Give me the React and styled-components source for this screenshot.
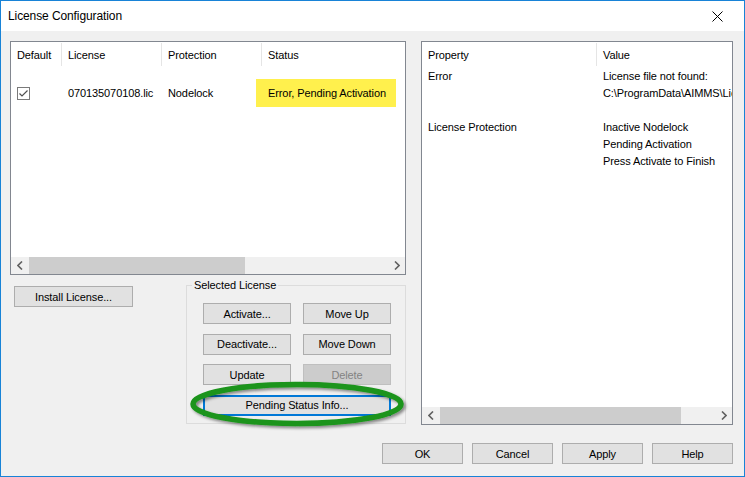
import styled, { createGlobalStyle } from "styled-components";

const GlobalStyle = createGlobalStyle`
  html, body { margin: 0; padding: 0; background: #ffffff; }
  body {
    font-family: "Liberation Sans", Arial, sans-serif;
    font-size: 11px;
    letter-spacing: -0.1px;
    color: #000;
  }
  * { box-sizing: border-box; }
`;

const Window = styled.div`
  position: relative;
  width: 745px;
  height: 477px;
  border: 1px solid #1883d7;
  background: #f0f0f0;
  display: flex;
  flex-direction: column;
  overflow: hidden;
`;

const TitleBar = styled.div`
  height: 30px;
  background: #ffffff;
  display: flex;
  align-items: center;
  justify-content: space-between;
  padding: 0 21px 0 7px;
  font-size: 12px;
`;

const Body = styled.div`
  flex: 1;
  display: flex;
  flex-direction: column;
  padding: 10px 11px 0 9px;
`;

const Main = styled.div`
  display: grid;
  grid-template-columns: 396px 312px;
  column-gap: 15px;
`;

const LeftColumn = styled.div`
  display: flex;
  flex-direction: column;
`;

const ListBox = styled.div`
  height: ${(p) => p.$h}px;
  background: #fff;
  border: 1px solid #828790;
  display: flex;
  flex-direction: column;
  overflow: hidden;
`;

const HeaderRow = styled.div`
  display: grid;
  grid-template-columns: ${(p) => p.$cols};
  height: 24px;
  flex: none;
`;

const HeaderCell = styled.div`
  display: flex;
  align-items: center;
  padding-left: 6px;
  border-right: ${(p) => (p.$last ? "none" : "1px solid #e5e5e5")};
  margin-top: 1px;
  white-space: nowrap;
`;

const DataRow = styled.div`
  display: grid;
  grid-template-columns: 51px 100px 100px minmax(0, 1fr);
  margin-top: 13px;
  height: 28px;
`;

const Cell = styled.div`
  display: flex;
  align-items: center;
  padding-left: 6px;
  white-space: nowrap;
`;

const StatusCell = styled.div`
  display: flex;
  align-items: center;
  margin-left: -6px;
  margin-right: 9px;
  padding-left: 12px;
  background: ${(p) => (p.$hl ? "#fff04d" : "transparent")};
  white-space: nowrap;
  overflow: hidden;
`;

const Check = styled.span`
  width: 13px;
  height: 13px;
  border: 1px solid #7a7a7a;
  background: #fff;
  display: flex;
  align-items: center;
  justify-content: center;
`;

const Spacer = styled.div`
  flex: 1;
`;

const ScrollBar = styled.div`
  height: 17px;
  flex: none;
  background: #f0f0f0;
  display: flex;
  align-items: center;
`;

const Arrow = styled.div`
  width: 17px;
  height: 17px;
  display: flex;
  align-items: center;
  justify-content: center;
  flex: none;
`;

const Track = styled.div`
  flex: 1;
  height: 17px;
  display: flex;
`;

const Thumb = styled.div`
  height: 17px;
  background: #cdcdcd;
`;

const PropGrid = styled.div`
  display: grid;
  grid-template-columns: 175px minmax(0, 1fr);
  padding-top: 2px;
  line-height: 17px;
`;

const PropCell = styled.div`
  padding-left: 6px;
  white-space: nowrap;
  overflow: hidden;
  margin-bottom: ${(p) => p.$gap || 0}px;
`;

const LowerRow = styled.div`
  display: flex;
  justify-content: space-between;
  align-items: flex-start;
  padding-left: 4px;
`;

const Button = styled.button`
  width: ${(p) => p.$w || 88}px;
  height: ${(p) => p.$h || 21}px;
  margin: 0;
  padding: 0;
  font-family: inherit;
  font-size: 11px;
  letter-spacing: -0.1px;
  color: ${(p) => (p.disabled ? "#838383" : "#000")};
  background: ${(p) => (p.disabled ? "#cccccc" : "#e1e1e1")};
  border: ${(p) =>
    p.$focus ? "2px solid #0078d7" : p.disabled ? "1px solid #bfbfbf" : "1px solid #adadad"};
  ${(p) => p.$span && "grid-column: 1 / span 2; width: auto;"}
`;

const InstallButton = styled(Button)`
  margin-top: 11px;
`;

const GroupBox = styled.fieldset`
  margin: 3px 0 0 0;
  width: 219px;
  padding: 11px 14px 7px 16px;
  border: 1px solid #dcdcdc;
  display: grid;
  grid-template-columns: 88px 88px;
  column-gap: 12px;
  row-gap: 9.5px;
`;

const Legend = styled.legend`
  padding: 0 2px;
  margin-left: -11px;
  line-height: 14px;
`;

const Footer = styled.div`
  display: flex;
  justify-content: flex-end;
  gap: 9px;
  margin-top: 18px;
`;

const Ring = styled.svg`
  position: absolute;
  left: 184px;
  top: 377px;
  pointer-events: none;
`;

const Chevron = ({ dir }) => (
  <svg width="6" height="9" viewBox="0 0 6 9">
    <path
      d={dir === "left" ? "M5 0.5 L1 4.5 L5 8.5" : "M1 0.5 L5 4.5 L1 8.5"}
      fill="none"
      stroke="#606060"
      strokeWidth="1.6"
    />
  </svg>
);

const HScroll = ({ thumbLeft, thumbWidth }) => (
  <ScrollBar>
    <Arrow>
      <Chevron dir="left" />
    </Arrow>
    <Track>
      <div style={{ width: thumbLeft }} />
      <Thumb style={{ width: thumbWidth }} />
    </Track>
    <Arrow>
      <Chevron dir="right" />
    </Arrow>
  </ScrollBar>
);

const properties = [
  ["Error", ["License file not found:", "C:\\ProgramData\\AIMMS\\Licenses\\070135070108.lic"]],
  ["License Protection", ["Inactive Nodelock", "Pending Activation", "Press Activate to Finish"]],
];

export default function App() {
  return (
    <>
      <GlobalStyle />
      <Window>
        <TitleBar>
          <span>License Configuration</span>
          <svg width="11" height="11" viewBox="0 0 11 11">
            <path d="M0.5 0.5 L10.5 10.5 M10.5 0.5 L0.5 10.5" stroke="#000" strokeWidth="1" />
          </svg>
        </TitleBar>
        <Body>
          <Main>
            <LeftColumn>
              <ListBox $h={234}>
                <HeaderRow $cols="51px 100px 100px 1fr">
                  <HeaderCell>Default</HeaderCell>
                  <HeaderCell>License</HeaderCell>
                  <HeaderCell>Protection</HeaderCell>
                  <HeaderCell $last>Status</HeaderCell>
                </HeaderRow>
                <DataRow>
                  <Cell>
                    <Check>
                      <svg width="11" height="11" viewBox="0 0 11 11">
                        <path d="M1.5 5.5 L4 8 L9.5 2.5" fill="none" stroke="#505050" strokeWidth="1.2" />
                      </svg>
                    </Check>
                  </Cell>
                  <Cell>070135070108.lic</Cell>
                  <Cell>Nodelock</Cell>
                  <StatusCell $hl>Error, Pending Activation</StatusCell>
                </DataRow>
                <Spacer />
                <HScroll thumbLeft={1} thumbWidth={216} />
              </ListBox>
              <LowerRow>
                <InstallButton $w={119} $h={21}>Install License...</InstallButton>
                <GroupBox>
                  <Legend>Selected License</Legend>
                  <Button>Activate...</Button>
                  <Button>Move Up</Button>
                  <Button>Deactivate...</Button>
                  <Button>Move Down</Button>
                  <Button>Update</Button>
                  <Button disabled>Delete</Button>
                  <Button $span $focus>Pending Status Info...</Button>
                </GroupBox>
              </LowerRow>
            </LeftColumn>
            <ListBox $h={384}>
              <HeaderRow $cols="175px 1fr">
                <HeaderCell>Property</HeaderCell>
                <HeaderCell $last>Value</HeaderCell>
              </HeaderRow>
              <PropGrid>
                {properties.map(([name, values]) => [
                  <PropCell key={name} $gap={17}>{name}</PropCell>,
                  <PropCell key={name + "v"} $gap={17}>
                    {values.map((v) => (
                      <div key={v}>{v}</div>
                    ))}
                  </PropCell>,
                ])}
              </PropGrid>
              <Spacer />
              <HScroll thumbLeft={1} thumbWidth={241} />
            </ListBox>
          </Main>
          <Footer>
            <Button $w={81}>OK</Button>
            <Button $w={81}>Cancel</Button>
            <Button $w={81}>Apply</Button>
            <Button $w={81}>Help</Button>
          </Footer>
        </Body>
        <Ring width="226" height="54" viewBox="0 0 226 54">
          <defs>
            <filter id="sh" x="-10%" y="-30%" width="120%" height="160%">
              <feDropShadow dx="2" dy="2" stdDeviation="1.5" floodColor="#000" floodOpacity="0.45" />
            </filter>
          </defs>
          <ellipse cx="112" cy="26" rx="104" ry="19.5" fill="none" stroke="#1a941a" strokeWidth="5.5" filter="url(#sh)" />
        </Ring>
      </Window>
    </>
  );
}
